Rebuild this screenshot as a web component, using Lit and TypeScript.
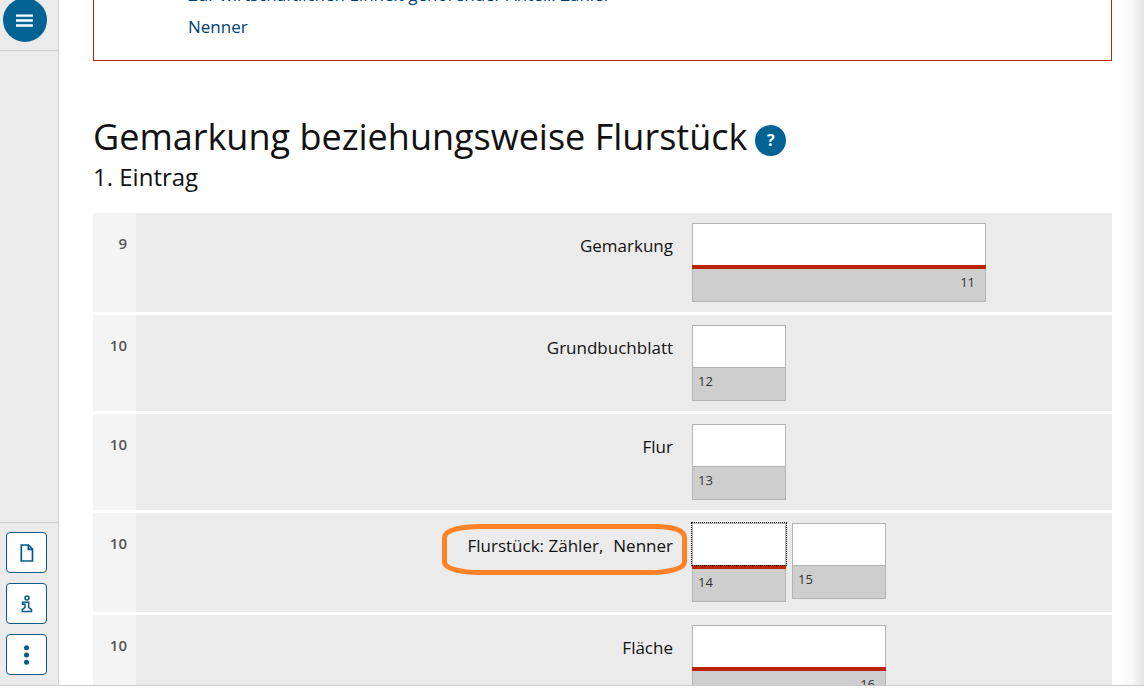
import { LitElement, html, svg, css, nothing } from "lit";
import { customElement, property } from "lit/decorators.js";
import { classMap } from "lit/directives/class-map.js";

interface Field {
  id: string;
  label: string;
  code: string;
  size: "small" | "medium" | "large";
  required?: boolean;
  active?: boolean;
}

interface Row {
  line: string;
  fields: Field[];
  marked?: boolean;
}

const ROWS: Row[] = [
  { line: "9", fields: [{ id: "gemarkung", label: "Gemarkung", code: "11", size: "large", required: true }] },
  { line: "10", fields: [{ id: "grundbuchblatt", label: "Grundbuchblatt", code: "12", size: "small" }] },
  { line: "10", fields: [{ id: "flur", label: "Flur", code: "13", size: "small" }] },
  {
    line: "10",
    marked: true,
    fields: [
      { id: "zaehler", label: "Flurstück: Zähler,", code: "14", size: "small", required: true, active: true },
      { id: "nenner", label: "Nenner", code: "15", size: "small" },
    ],
  },
  { line: "10", fields: [{ id: "flaeche", label: "Fläche", code: "16", size: "medium", required: true }] },
];

@customElement("form-row")
class FormRow extends LitElement {
  @property({ attribute: false }) row!: Row;

  static styles = css`
    :host {
      display: grid;
      grid-template-columns: 43px minmax(0, 1fr) 420px;
      background: #ebebeb;
    }
    .line {
      background: #f4f4f4;
      padding: 20px 9px 0 0;
      text-align: right;
      font-size: 15px;
      line-height: 20px;
      font-weight: 600;
      color: #555;
    }
    .labels {
      padding: 21px 19px 0 0;
      text-align: right;
      font-size: 17px;
      line-height: 24px;
    }
    .group {
      position: relative;
      display: inline-flex;
      gap: 10px;
    }
    .mark {
      position: absolute;
      right: -14px;
      top: -10px;
      width: 245px;
      height: 51px;
      pointer-events: none;
    }
    .fields {
      display: flex;
      align-items: flex-start;
      gap: 6px;
      padding: 10px 0;
    }
    .field {
      box-sizing: border-box;
    }
    .small {
      width: 94px;
    }
    .medium {
      width: 194px;
    }
    .large {
      width: 294px;
    }
    .control {
      display: flex;
      border-bottom: 1px solid #b3b3b3;
    }
    .required .control {
      border-bottom: 4px solid #bb2407;
    }
    input {
      box-sizing: border-box;
      width: 100%;
      height: 42px;
      margin: 0;
      padding: 0 8px;
      border: 1px solid #b3b3b3;
      border-bottom: 0;
      border-radius: 0;
      background: #fff;
      font: inherit;
      font-size: 17px;
      outline: 0;
    }
    input.active {
      position: relative;
      outline: 1px dotted #000;
    }
    .code {
      box-sizing: border-box;
      height: 33px;
      padding: 3px 10px 0 5px;
      border: 1px solid #b3b3b3;
      border-top: 0;
      background: #cecece;
      font-size: 13px;
      line-height: 20px;
      color: #333;
    }
    .medium .code,
    .large .code {
      text-align: right;
    }
  `;

  render() {
    const { line, fields, marked } = this.row;
    return html`
      <div class="line">${line}</div>
      <div class="labels">
        <span class="group">
          ${fields.map((f) => html`<label for=${f.id}>${f.label}</label>`)}
          ${marked
            ? svg`<svg class="mark" viewBox="0 0 245 51" fill="none" stroke="#ff8125" stroke-width="5" aria-hidden="true">
                <path d="M2.5 13.5C2.5 6 20 2.5 38 2.5H214C230 2.5 242.5 6 242.5 13.5V38C242.5 45 225 48.5 208 48.5H38C20 48.5 2.5 45 2.5 38Z" />
              </svg>`
            : nothing}
        </span>
      </div>
      <div class="fields">
        ${fields.map(
          (f) => html`
            <div class=${classMap({ field: true, [f.size]: true, required: !!f.required })}>
              <div class="control">
                <input id=${f.id} type="text" class=${classMap({ active: !!f.active })} />
              </div>
              <div class="code">${f.code}</div>
            </div>
          `,
        )}
      </div>
    `;
  }
}

@customElement("app-root")
class AppRoot extends LitElement {
  static styles = css`
    :host {
      display: block;
      box-sizing: border-box;
      height: 100vh;
      padding-bottom: 6px;
      background: #fff;
      color: #111;
      font-family: "Open Sans", "Noto Sans", sans-serif;
    }
    .shell {
      box-sizing: border-box;
      display: flex;
      height: 100%;
      border-bottom: 1px solid #ccc;
      overflow: hidden;
    }
    .rail {
      box-sizing: border-box;
      display: flex;
      flex: none;
      flex-direction: column;
      justify-content: space-between;
      width: 59px;
      border-right: 1px solid #ccc;
      background: #ebebeb;
    }
    .top {
      margin-top: -2px;
      padding: 0 3px 8px;
      border-bottom: 1px solid #ccc;
    }
    button {
      display: flex;
      align-items: center;
      justify-content: center;
      margin: 0;
      padding: 0;
      font: inherit;
      cursor: pointer;
    }
    .menu {
      width: 44px;
      height: 44px;
      border: 0;
      border-radius: 50%;
      background: #006393;
    }
    .tools {
      display: flex;
      flex-direction: column;
      gap: 10px;
      padding: 9px 6px 10px;
      border-top: 1px solid #ccc;
    }
    .tool {
      width: 41px;
      height: 41px;
      border: 1px solid #005b8a;
      border-radius: 4px;
      background: #fff;
    }
    .page {
      flex: 1;
      min-width: 0;
      overflow: hidden;
      padding: 0 32px 0 34px;
      background: linear-gradient(to left, #e4e4e4, #f7f7f7 12px, #fff 26px);
    }
    .notice {
      margin-top: -22px;
      padding: 0 94px 17px;
      border: 1px solid #bb2407;
      background: #fff;
      font-size: 17px;
      line-height: 32px;
    }
    .notice a {
      display: block;
      width: fit-content;
      color: #004071;
      text-decoration: none;
    }
    .title {
      display: flex;
      align-items: center;
      gap: 8px;
      margin-top: 52px;
    }
    h1,
    h2 {
      margin: 0;
      font-weight: 400;
    }
    h1 {
      font-size: 36px;
      line-height: 48px;
    }
    h2 {
      font-size: 24px;
      line-height: 32px;
    }
    .help {
      width: 31px;
      height: 31px;
      margin-top: 6px;
      border: 0;
      border-radius: 50%;
      background: #006393;
      color: #fff;
      font-size: 16px;
      font-weight: 700;
      line-height: 20px;
    }
    .rows {
      display: grid;
      gap: 3px;
      margin-top: 20px;
    }
  `;

  render() {
    return html`
      <div class="shell">
        <nav class="rail">
          <div class="top">
            <button class="menu" aria-label="Menü">
              <svg width="18" height="13" viewBox="0 0 18 13" fill="#fff">
                <path d="M0 .5H17V2.8H0zM0 5.2H17V7.8H0zM0 10.2H17V12.8H0z" />
              </svg>
            </button>
          </div>
          <div class="tools">
            <button class="tool" aria-label="Dokument">
              <svg width="14" height="18" viewBox="0 0 14 18" fill="none" stroke="#005b8a" stroke-width="1.7">
                <path d="M1.3 1H8.5L12.5 5V17H1.3zM8.3 1V5.3H12.5" />
              </svg>
            </button>
            <button class="tool" aria-label="Information">
              <svg width="12" height="18" viewBox="0 0 12 18" fill="none" stroke="#005b8a" stroke-width="1.5">
                <circle cx="6" cy="3" r="2" />
                <path d="M1.5 7.2H7.7V12.5L10.5 14.5V16.6H1.3V14.5L4 12.500V9.300H1.500z" />
              </svg>
            </button>
            <button class="tool" aria-label="Mehr">
              <svg width="8" height="20" viewBox="0 0 8 20" fill="#005b8a">
                <circle cx="3.5" cy="2.7" r="2.5" />
                <circle cx="3.5" cy="10" r="2.5" />
                <circle cx="3.5" cy="17.3" r="2.5" />
              </svg>
            </button>
          </div>
        </nav>
        <main class="page">
          <div class="notice">
            <a href="#zaehler">Zur wirtschaftlichen Einheit gehörender Anteil: Zähler</a>
            <a href="#nenner">Nenner</a>
          </div>
          <div class="title">
            <h1>Gemarkung beziehungsweise Flurstück</h1>
            <button class="help" aria-label="Hilfe">?</button>
          </div>
          <h2>1. Eintrag</h2>
          <div class="rows">${ROWS.map((row) => html`<form-row .row=${row}></form-row>`)}</div>
        </main>
      </div>
    `;
  }
}
